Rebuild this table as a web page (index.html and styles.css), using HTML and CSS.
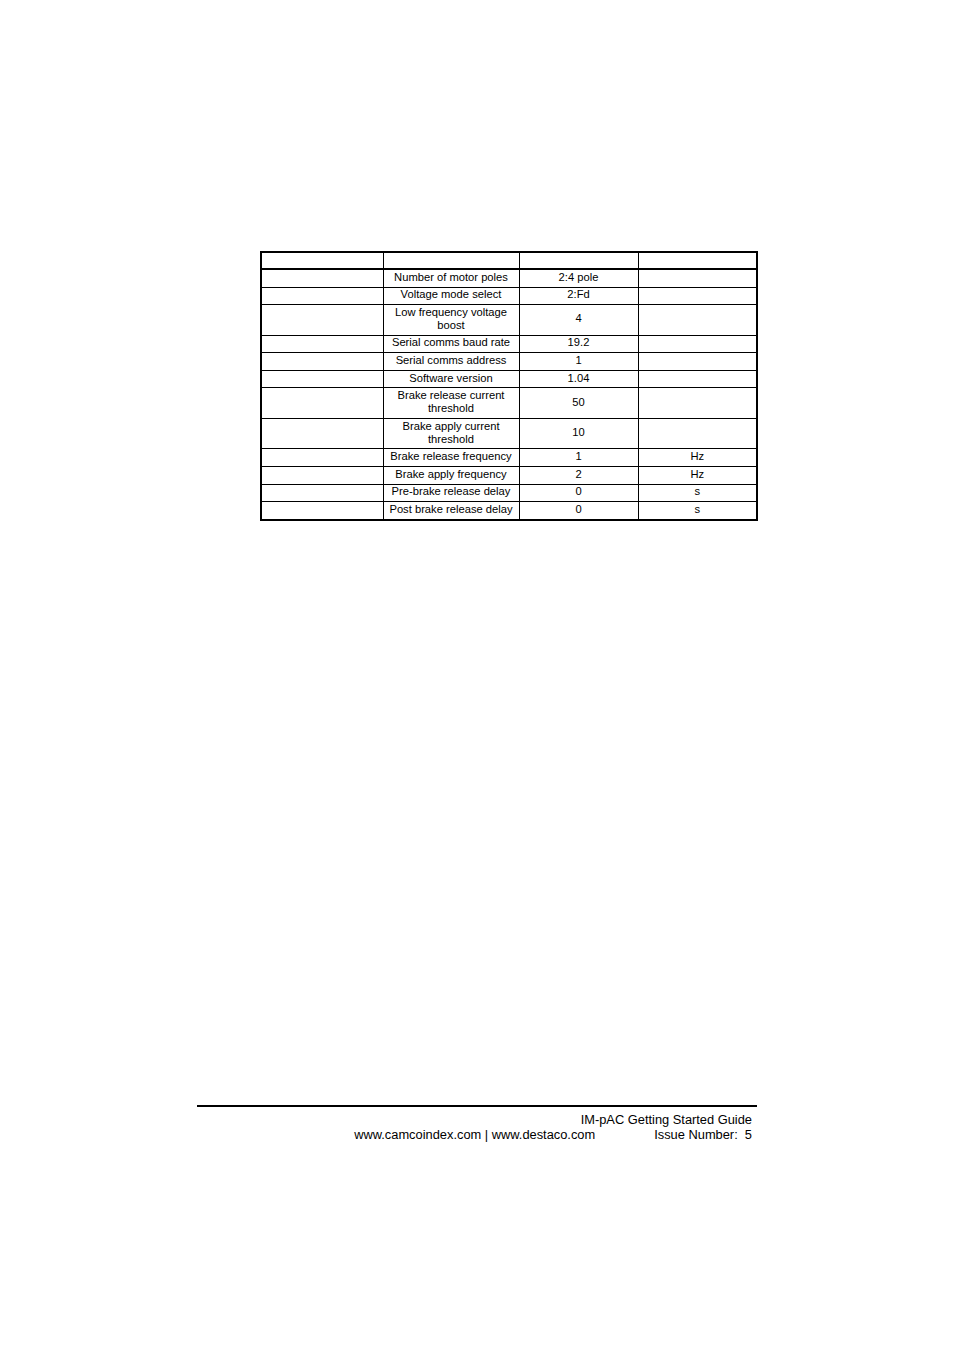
FILE: index.html
```html
<!DOCTYPE html>
<html>
<head>
<meta charset="utf-8">
<link rel="stylesheet" href="styles.css">
</head>
<body>
<div class="page">
  <table class="params">
    <colgroup>
      <col class="c1"><col class="c2"><col class="c3"><col class="c4">
    </colgroup>
    <thead>
      <tr><th></th><th></th><th></th><th></th></tr>
    </thead>
    <tbody>
      <tr><td></td><td>Number of motor poles</td><td>2:4 pole</td><td></td></tr>
      <tr><td></td><td>Voltage mode select</td><td>2:Fd</td><td></td></tr>
      <tr class="tall"><td></td><td>Low frequency voltage<br>boost</td><td>4</td><td></td></tr>
      <tr><td></td><td>Serial comms baud rate</td><td>19.2</td><td></td></tr>
      <tr><td></td><td>Serial comms address</td><td>1</td><td></td></tr>
      <tr><td></td><td>Software version</td><td>1.04</td><td></td></tr>
      <tr class="tall"><td></td><td>Brake release current<br>threshold</td><td>50</td><td></td></tr>
      <tr class="tall"><td></td><td>Brake apply current<br>threshold</td><td>10</td><td></td></tr>
      <tr><td></td><td>Brake release frequency</td><td>1</td><td>Hz</td></tr>
      <tr><td></td><td>Brake apply frequency</td><td>2</td><td>Hz</td></tr>
      <tr><td></td><td>Pre-brake release delay</td><td>0</td><td>s</td></tr>
      <tr><td></td><td>Post brake release delay</td><td>0</td><td>s</td></tr>
    </tbody>
  </table>

  <footer class="footer">
    <div class="line">IM-pAC Getting Started Guide</div>
    <div class="line two">
      <span class="urls">www.camcoindex.com | www.destaco.com</span>
      <span class="issue">Issue Number:  5</span>
    </div>
  </footer>
</div>
</body>
</html>
```

FILE: styles.css
```css
html, body {
  margin: 0;
  padding: 0;
  background: #ffffff;
}

body {
  font-family: "Liberation Sans", Arial, sans-serif;
  color: #000000;
}

.page {
  width: 954px;
  height: 1350px;
  padding-top: 251px;
  box-sizing: border-box;
}

.params {
  margin-left: 260px;
  width: 496px;
  border-collapse: collapse;
  table-layout: fixed;
  border: 2px solid #000;
  font-size: 11.2px;
  line-height: 13px;
}

.params .c1 { width: 122px; }
.params .c2 { width: 136px; }
.params .c3 { width: 119px; }
.params .c4 { width: 119px; }

.params th,
.params td {
  border: 1px solid #000;
  padding: 0 2px 2px 2px;
  text-align: center;
  vertical-align: middle;
  font-weight: normal;
  height: 14.6px;
}

.params thead th {
  height: 15px;
  padding-bottom: 0;
  border-bottom: 2px solid #000;
}

.params tr.tall td {
  height: 27.5px;
}

.footer {
  margin-top: 584px;
  margin-left: 197px;
  width: 560px;
  border-top: 2px solid #000;
  padding-top: 5px;
  padding-right: 5px;
  box-sizing: border-box;
  font-size: 12.85px;
  line-height: 15px;
}

.footer .line {
  text-align: right;
}

.footer .two {
  display: flex;
  justify-content: flex-end;
  gap: 59px;
}

.footer .issue {
  white-space: pre;
}
```
